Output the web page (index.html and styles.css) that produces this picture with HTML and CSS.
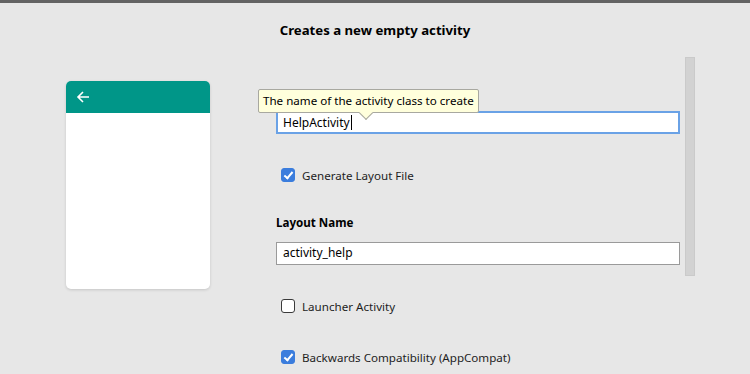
FILE: index.html
```html
<!DOCTYPE html>
<html lang="en">
<head>
    <meta charset="UTF-8">
    <title>Empty Activity</title>
    <link rel="stylesheet" href="styles.css">
</head>
<body>
    <div class="top-bar"></div>
    <header class="header">
        <h1>Creates a new empty activity</h1>
    </header>

    <div class="main">
        <div class="preview">
            <div class="preview-bar">
                <svg width="14" height="14" viewBox="0 0 14 14">
                    <path d="M13 7H2M7 2L2 7l5 5" fill="none" stroke="#fff" stroke-width="1.6"/>
                </svg>
            </div>
        </div>

        <div class="form-wrap">
            <div class="form">
                <div class="field focused">HelpActivity<span class="caret"></span></div>

                <div class="tooltip">The name of the activity class to create</div>

                <label class="check-row">
                    <span class="box checked"></span>Generate Layout File
                </label>

                <div class="label layout-label">Layout Name</div>
                <div class="field plain">activity_help</div>

                <label class="check-row">
                    <span class="box"></span>Launcher Activity
                </label>

                <label class="check-row">
                    <span class="box checked"></span>Backwards Compatibility (AppCompat)
                </label>
            </div>
            <div class="scrollbar"></div>
        </div>
    </div>
</body>
</html>
```

FILE: styles.css
```css
body {
    margin: 0;
    height: 374px;
    overflow: hidden;
    background-color: #e7e7e7;
    font-family: "Noto Sans", "Open Sans", sans-serif;
    font-size: 11.6px;
    color: #1e1e1e;
}

.top-bar {
    height: 3px;
    background-color: #636363;
}

.header {
    height: 54px;
}

.header h1 {
    margin: 0;
    padding-top: 17px;
    text-align: center;
    font-size: 13.2px;
    line-height: 20px;
    font-weight: bold;
    color: #000;
}

.main {
    display: flex;
    padding-left: 66px;
}

.preview {
    width: 144px;
    height: 208px;
    margin-top: 24px;
    background-color: #fff;
    border-radius: 5px;
    overflow: hidden;
    box-shadow: 0 1px 3px rgba(0, 0, 0, 0.15);
}

.preview-bar {
    height: 32px;
    background-color: #009688;
    display: flex;
    align-items: center;
    padding-left: 10px;
}

.preview-bar svg {
    display: block;
}

.form-wrap {
    display: flex;
    gap: 5px;
    margin-left: 66px;
}

.form {
    position: relative;
    width: 404px;
    padding-top: 54px;
}

.label {
    font-weight: bold;
    line-height: 20px;
    color: #000;
}

.field {
    box-sizing: border-box;
    height: 23px;
    padding-left: 6px;
    line-height: 19px;
    background-color: #fff;
    border: 1px solid #9a9a9a;
    color: #000;
    font-size: 12px;
}

.field.focused {
    border: 2px solid #6aa2e6;
    padding-left: 5px;
}

.caret {
    display: inline-block;
    width: 1px;
    height: 15px;
    margin-left: 1px;
    vertical-align: -3px;
    background-color: #000;
}

.tooltip {
    position: absolute;
    left: -18px;
    top: 32px;
    height: 22px;
    padding: 0 4px;
    line-height: 22px;
    background-color: #ffffdc;
    border: 1px solid #a8a8a0;
    border-radius: 2px;
    color: #000;
    white-space: nowrap;
}

.tooltip::after {
    content: '';
    position: absolute;
    left: 102px;
    bottom: -6px;
    width: 9px;
    height: 9px;
    background-color: #ffffdc;
    border-right: 1px solid #a8a8a0;
    border-bottom: 1px solid #a8a8a0;
    transform: rotate(45deg);
    transform-origin: center;
}

.check-row {
    display: flex;
    align-items: center;
    height: 20px;
    margin-top: 31px;
    padding-left: 5px;
    gap: 7px;
}

.box {
    box-sizing: border-box;
    width: 14px;
    height: 14px;
    border: 1px solid #3a3a3a;
    border-radius: 3px;
    background-color: #fff;
    position: relative;
}

.box.checked {
    border-color: #3b7ddd;
    background-color: #3b7ddd;
}

.box.checked::after {
    content: '';
    position: absolute;
    left: 4px;
    top: 1px;
    width: 3px;
    height: 7px;
    border-right: 2px solid #fff;
    border-bottom: 2px solid #fff;
    transform: rotate(40deg);
}

.layout-label {
    margin-top: 28px;
}

.field.plain {
    height: 23px;
    margin-top: 9px;
}

.scrollbar {
    box-sizing: border-box;
    width: 10px;
    height: 219px;
    background-color: #d2d2d2;
    border: 1px solid #cacaca;
}
```
